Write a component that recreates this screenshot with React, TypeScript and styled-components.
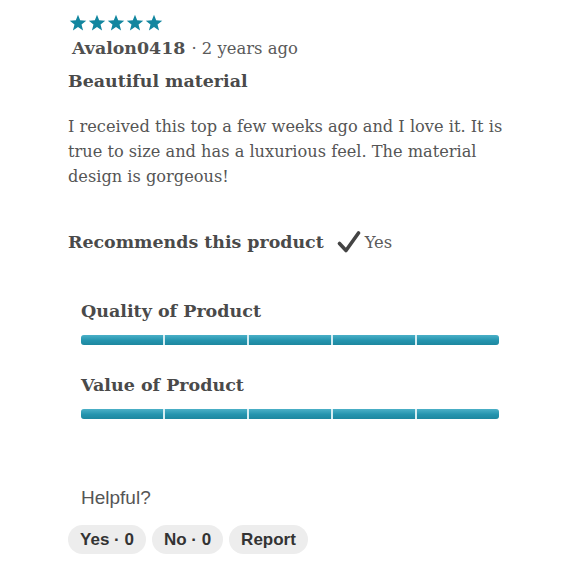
import React from "react";
import styled, { createGlobalStyle } from "styled-components";

const Global = createGlobalStyle`
  html, body { margin: 0; padding: 0; background: #ffffff; }
  body { font-family: "DejaVu Serif", serif; color: #555; }
`;

const Page = styled.div`
  width: 580px;
  height: 580px;
  box-sizing: border-box;
  padding: 13px 0 0 68px;
  overflow: hidden;
`;

const Stars = styled.div`
  display: flex;
  gap: 1px;
  margin-left: 1px;
  height: 20px;
`;

const Star = styled.svg`
  width: 18px;
  height: 19px;
  fill: #12869f;
`;

const Meta = styled.div`
  display: flex;
  align-items: baseline;
  margin-top: 5px;
  margin-left: 4px;
  height: 26px;
`;

const Username = styled.span`
  font-weight: 700;
  font-size: 17.4px;
  color: #505050;
`;

const Ago = styled.span`
  font-size: 16.4px;
  color: #5a5a5a;
  margin-left: 6px;
`;

const Title = styled.h2`
  margin: 5px 0 0;
  font-size: 17.4px;
  font-weight: 700;
  color: #4a4a4a;
  line-height: 24px;
`;

const Body = styled.p`
  margin: 21px 0 0;
  width: 445px;
  font-size: 16.2px;
  line-height: 25px;
  color: #555;
`;

const Recommend = styled.div`
  display: flex;
  align-items: center;
  margin-top: 40px;
  height: 26px;
`;

const RecLabel = styled.span`
  font-weight: 700;
  font-size: 17.4px;
  color: #4a4a4a;
`;

const Check = styled.svg`
  width: 24px;
  height: 22px;
  margin-left: 13px;
  margin-right: 4px;
`;

const RecValue = styled.span`
  font-size: 16.4px;
  color: #5a5a5a;
`;

const Ratings = styled.div`
  margin-top: 45px;
  margin-left: 13px;
  display: flex;
  flex-direction: column;
  gap: 29px;
`;

const RatingBlock = styled.div`
  display: flex;
  flex-direction: column;
  gap: 13px;
`;

const RatingLabel = styled.div`
  font-weight: 700;
  font-size: 17.5px;
  color: #4a4a4a;
  line-height: 22px;
`;

const Bar = styled.div`
  display: flex;
  width: 418px;
  height: 10px;
  border-radius: 3px;
  overflow: hidden;
  gap: 2px;
  background: #d6edf2;
`;

const Segment = styled.div`
  flex: 1;
  background: linear-gradient(#4bb0c7, #2494ae 55%, #1d879f);
`;

const Helpful = styled.div`
  margin-top: 68px;
  margin-left: 13px;
  font-family: "Liberation Sans", Arial, sans-serif;
  font-size: 19px;
  color: #555;
  line-height: 22px;
`;

const Buttons = styled.div`
  display: flex;
  gap: 6px;
  margin-top: 16px;
`;

const Pill = styled.button<{ $w: number }>`
  width: ${(p) => p.$w}px;
  height: 29px;
  border: none;
  border-radius: 15px;
  background: #ededed;
  font-family: "Liberation Sans", Arial, sans-serif;
  font-weight: 700;
  font-size: 17px;
  color: #333;
  padding: 0;
`;

const StarIcon = () => (
  <Star viewBox="0 0 24 24">
    <path d="M12 1.5l2.9 7.6 8.1.4-6.3 5.1 2.1 7.9L12 18 5.2 22.5l2.1-7.9L1 9.5l8.1-.4z" />
  </Star>
);

const ratings = ["Quality of Product", "Value of Product"];

export default function App() {
  return (
    <Page>
      <Global />
      <Stars>
        {[0, 1, 2, 3, 4].map((i) => (
          <StarIcon key={i} />
        ))}
      </Stars>
      <Meta>
        <Username>Avalon0418</Username>
        <Ago>· 2 years ago</Ago>
      </Meta>
      <Title>Beautiful material</Title>
      <Body>
        I received this top a few weeks ago and I love it. It is true to size and has a
        luxurious feel. The material design is gorgeous!
      </Body>
      <Recommend>
        <RecLabel>Recommends this product</RecLabel>
        <Check viewBox="0 0 24 22">
          <path d="M2.5 12.5l6.5 7 12.5-17.5" fill="none" stroke="#444" strokeWidth="3.6" strokeLinecap="round" strokeLinejoin="round" />
        </Check>
        <RecValue>Yes</RecValue>
      </Recommend>
      <Ratings>
        {ratings.map((r) => (
          <RatingBlock key={r}>
            <RatingLabel>{r}</RatingLabel>
            <Bar>
              {[0, 1, 2, 3, 4].map((i) => (
                <Segment key={i} />
              ))}
            </Bar>
          </RatingBlock>
        ))}
      </Ratings>
      <Helpful>Helpful?</Helpful>
      <Buttons>
        <Pill $w={78}>Yes · 0</Pill>
        <Pill $w={71}>No · 0</Pill>
        <Pill $w={79}>Report</Pill>
      </Buttons>
    </Page>
  );
}
